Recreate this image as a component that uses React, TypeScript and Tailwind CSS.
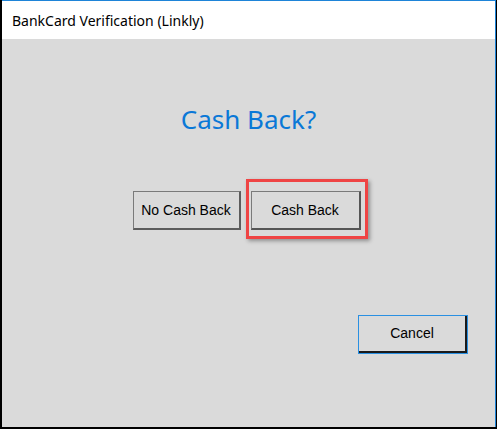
export default function App() {
  return (
    <div className="w-[497px] h-[429px] bg-black pl-[2px] pr-px pb-[2px]">
      <div className="h-full flex flex-col border-t border-r border-[#1e84d8] bg-[#dadada]">
        {/* Title bar */}
        <div className="h-[38px] shrink-0 bg-white flex items-center pl-[10px]">
          <span
            className="text-[14px] text-black"
            style={{ fontFamily: '"Noto Sans", "Open Sans", sans-serif' }}
          >
            BankCard Verification (Linkly)
          </span>
        </div>

        {/* Body */}
        <div className="flex-1 flex flex-col items-center pt-[64px]">
          <h1
            className="text-[26px] leading-[32px] text-[#0a78d7]"
            style={{ fontFamily: '"Noto Sans", "Open Sans", sans-serif' }}
          >
            Cash Back?
          </h1>

          <div
            className="mt-[56px] mr-[4px] flex gap-[10px] text-[14px] text-black"
            style={{ fontFamily: '"Liberation Sans", Arial, sans-serif' }}
          >
            <button className="w-[108px] h-[39px] bg-[#dadada] border-l border-t border-r-2 border-b-2 border-l-[#7a7a7a] border-t-[#7a7a7a] border-r-[#5c5c5c] border-b-[#5c5c5c]">
              No Cash Back
            </button>
            <div className="relative">
              <div className="absolute left-[-5px] right-[-7px] top-[-12px] bottom-[-9px] border-[3px] border-[#ef4444] shadow-[2px_2px_4px_rgba(0,0,0,0.35)]" />
              <button className="relative w-[110px] h-[39px] bg-[#dadada] border-l border-t border-r-2 border-b-2 border-l-[#7a7a7a] border-t-[#7a7a7a] border-r-[#555555] border-b-[#555555]">
                Cash Back
              </button>
            </div>
          </div>

          <div
            className="self-end mr-[27px] mt-[85px] text-[14px] text-black"
            style={{ fontFamily: '"Liberation Sans", Arial, sans-serif' }}
          >
            <button className="w-[110px] h-[39px] border border-[#2a90e2] bg-[#dadada]">
              <span className="flex h-full w-full items-center justify-center border-r-2 border-b-2 border-[#1a1a1a]">
                Cancel
              </span>
            </button>
          </div>
        </div>
      </div>
    </div>
  );
}
